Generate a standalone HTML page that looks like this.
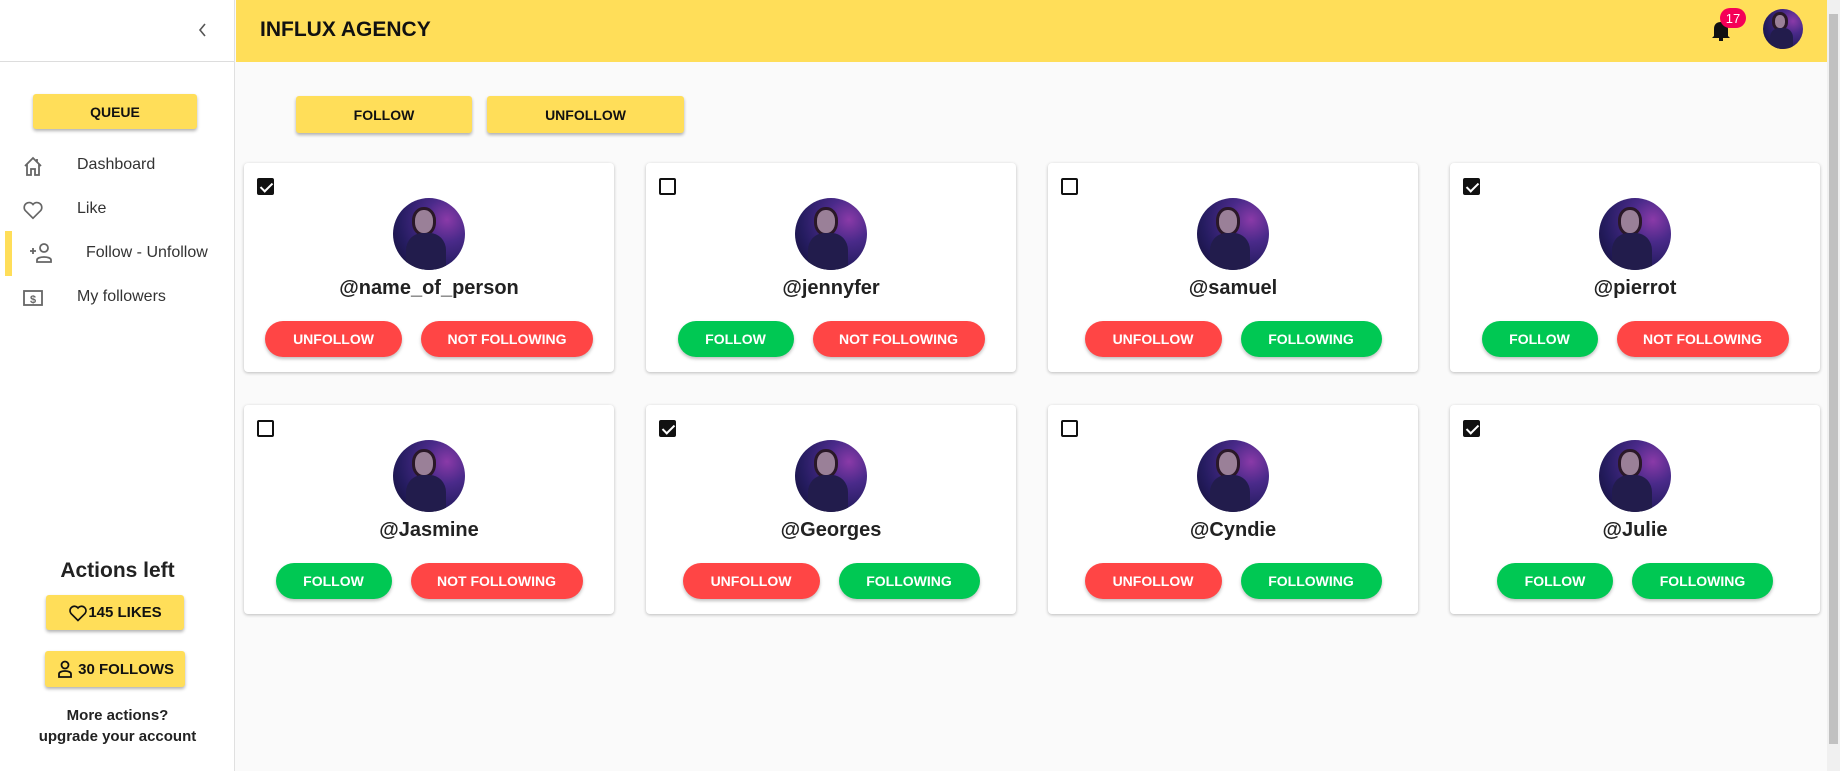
<!DOCTYPE html>
<html><head><meta charset="utf-8"><style>
*{box-sizing:border-box;margin:0;padding:0}
body{width:1840px;height:771px;overflow:hidden;background:#fafafa;font-family:"Liberation Sans",sans-serif;position:relative;color:#222}
.side{position:absolute;left:0;top:0;width:235px;height:771px;background:#fff;border-right:1px solid #e0e0e0}
.sidetop{height:62px;border-bottom:1px solid #ddd;position:relative}
.hdr{position:absolute;left:236px;top:0;width:1591px;height:62px;background:#ffde59}
.scroll{position:absolute;right:0;top:0;width:13px;height:771px;background:#f0f0f0}
.scroll div{position:absolute;left:2px;top:14px;width:9px;height:730px;background:#c1c1c1}
.ybtn{position:absolute;background:#ffde59;box-shadow:0 2px 3px rgba(0,0,0,.3);border-radius:3px;font-size:14px;font-weight:bold;color:#111;display:flex;align-items:center;justify-content:center}
.nav{position:absolute;font-size:16px;color:#333}
.card{position:absolute;width:370px;height:209px;background:#fff;border-radius:4px;box-shadow:0 1px 3px rgba(0,0,0,.25)}
.cb{position:absolute;left:13px;top:15px;width:17px;height:17px;border:2px solid #111;border-radius:2px}
.cb.on{background:#111}
.cb.on:after{content:"";position:absolute;left:4px;top:0px;width:5px;height:10px;border:solid #fff;border-width:0 2px 2px 0;transform:rotate(45deg)}
.av{position:absolute;left:149px;top:35px;width:72px;height:72px;border-radius:50%;overflow:hidden;background:radial-gradient(circle at 75% 30%,#8a3aa8 0,#4a2a8a 30%,#251c60 65%,#120e32)}
.av:before{content:"";position:absolute;left:30%;top:16%;width:26%;height:32%;border-radius:45%;background:#9a8098;box-shadow:0 0 0 3px #2a1828}
.av:after{content:"";position:absolute;left:18%;top:48%;width:56%;height:60%;border-radius:40% 40% 0 0;background:#221c4c}
.name{position:absolute;left:0;right:0;top:114px;text-align:center;font-weight:bold;font-size:20px;color:#222}
.btns{position:absolute;left:0;right:0;top:158px;display:flex;justify-content:center;gap:19px}
.b{height:36px;border-radius:18px;color:#fff;font-size:14px;font-weight:bold;display:flex;align-items:center;justify-content:center;box-shadow:0 2px 3px rgba(0,0,0,.25)}
.r{background:#ff4545}.g{background:#00c853}
</style></head><body>
<div class="side">
<div class="sidetop"><svg style="position:absolute;left:197px;top:22px" width="12" height="16" viewBox="0 0 12 16"><path d="M8 2 L3 8 L8 14" stroke="#555" stroke-width="1.6" fill="none"/></svg></div>
<div class="ybtn" style="left:33px;top:94px;width:164px;height:35px">QUEUE</div>
<svg style="position:absolute;left:22px;top:155px" width="22" height="22" viewBox="0 0 22 22"><path d="M3 11 L11 3 L19 11 M5 9 V20 H9 V14 H13 V20 H17 V9 M15 4 V7" stroke="#666" stroke-width="1.8" fill="none"/></svg>
<div class="nav" style="left:77px;top:156px">Dashboard</div>
<svg style="position:absolute;left:22px;top:199px" width="22" height="22" viewBox="0 0 24 24"><path d="M12 21 L3.5 12.5 A5 5 0 0 1 12 6 A5 5 0 0 1 20.5 12.5 Z" stroke="#666" stroke-width="1.8" fill="none"/></svg>
<div class="nav" style="left:77px;top:200px">Like</div>
<div style="position:absolute;left:5px;top:231px;width:7px;height:45px;background:#ffde59"></div>
<svg style="position:absolute;left:29px;top:242px" width="26" height="22" viewBox="0 0 26 22"><path d="M1 9 H7 M4 6 V12" stroke="#666" stroke-width="1.8"/><circle cx="15" cy="6" r="4" stroke="#666" stroke-width="1.8" fill="none"/><path d="M8 20 V18 C8 14 22 14 22 18 V20 Z" stroke="#666" stroke-width="1.8" fill="none"/></svg>
<div class="nav" style="left:86px;top:244px">Follow - Unfollow</div>
<svg style="position:absolute;left:22px;top:287px" width="22" height="22" viewBox="0 0 22 22"><rect x="2" y="4" width="18" height="14" stroke="#666" stroke-width="1.8" fill="none"/><text x="11" y="16" font-size="11" text-anchor="middle" fill="#666" font-family="Liberation Sans" font-weight="bold">$</text></svg>
<div class="nav" style="left:77px;top:288px">My followers</div>
<div style="position:absolute;left:0;width:235px;top:559px;text-align:center;font-size:21px;font-weight:bold">Actions left</div>
<div class="ybtn" style="left:46px;top:595px;width:138px;height:35px;font-size:15px"><svg width="20" height="20" viewBox="0 0 24 24"><path d="M12 21 L3.5 12.5 A5 5 0 0 1 12 6 A5 5 0 0 1 20.5 12.5 Z" stroke="#111" stroke-width="2" fill="none"/></svg>145 LIKES</div>
<div class="ybtn" style="left:45px;top:651px;width:140px;height:36px;font-size:15px"><svg width="18" height="18" viewBox="0 0 18 18"><circle cx="9" cy="5" r="3.5" stroke="#111" stroke-width="1.8" fill="none"/><path d="M3 17 V14 C3 10 15 10 15 14 V17 Z" stroke="#111" stroke-width="1.8" fill="none"/></svg>&nbsp;30 FOLLOWS</div>
<div style="position:absolute;left:0;width:235px;top:705px;text-align:center;font-size:15px;font-weight:bold;line-height:21px">More actions?<br>upgrade your account</div>
</div>
<div class="hdr">
<div style="position:absolute;left:24px;top:18px;font-size:21px;font-weight:bold;color:#111">INFLUX AGENCY</div>
<svg style="position:absolute;left:1475px;top:18px" width="20" height="24" viewBox="0 0 20 24"><path d="M3 18 V11 C3 6 6 4 10 4 C14 4 17 6 17 11 V18 L19 20 H1 Z" fill="#111"/><rect x="8" y="20" width="4" height="3" fill="#111"/></svg>
<div style="position:absolute;left:1484px;top:8px;width:26px;height:20px;border-radius:10px;background:#f50057;color:#fff;font-size:13px;display:flex;align-items:center;justify-content:center">17</div>
<div class="av" style="left:1527px;top:9px;width:40px;height:40px"></div>
</div>
<div class="scroll"><div></div></div>
<div class="ybtn" style="left:296px;top:96px;width:176px;height:37px">FOLLOW</div>
<div class="ybtn" style="left:487px;top:96px;width:197px;height:37px">UNFOLLOW</div>

<div class="card" style="left:244px;top:163px"><div class="cb on"></div><div class="av"></div><div class="name">@name_of_person</div><div class="btns"><div class="b r" style="width:137px">UNFOLLOW</div><div class="b r" style="width:172px">NOT FOLLOWING</div></div></div>
<div class="card" style="left:646px;top:163px"><div class="cb"></div><div class="av"></div><div class="name">@jennyfer</div><div class="btns"><div class="b g" style="width:116px">FOLLOW</div><div class="b r" style="width:172px">NOT FOLLOWING</div></div></div>
<div class="card" style="left:1048px;top:163px"><div class="cb"></div><div class="av"></div><div class="name">@samuel</div><div class="btns"><div class="b r" style="width:137px">UNFOLLOW</div><div class="b g" style="width:141px">FOLLOWING</div></div></div>
<div class="card" style="left:1450px;top:163px"><div class="cb on"></div><div class="av"></div><div class="name">@pierrot</div><div class="btns"><div class="b g" style="width:116px">FOLLOW</div><div class="b r" style="width:172px">NOT FOLLOWING</div></div></div>

<div class="card" style="left:244px;top:405px"><div class="cb"></div><div class="av"></div><div class="name">@Jasmine</div><div class="btns"><div class="b g" style="width:116px">FOLLOW</div><div class="b r" style="width:172px">NOT FOLLOWING</div></div></div>
<div class="card" style="left:646px;top:405px"><div class="cb on"></div><div class="av"></div><div class="name">@Georges</div><div class="btns"><div class="b r" style="width:137px">UNFOLLOW</div><div class="b g" style="width:141px">FOLLOWING</div></div></div>
<div class="card" style="left:1048px;top:405px"><div class="cb"></div><div class="av"></div><div class="name">@Cyndie</div><div class="btns"><div class="b r" style="width:137px">UNFOLLOW</div><div class="b g" style="width:141px">FOLLOWING</div></div></div>
<div class="card" style="left:1450px;top:405px"><div class="cb on"></div><div class="av"></div><div class="name">@Julie</div><div class="btns"><div class="b g" style="width:116px">FOLLOW</div><div class="b g" style="width:141px">FOLLOWING</div></div></div>
</body></html>
